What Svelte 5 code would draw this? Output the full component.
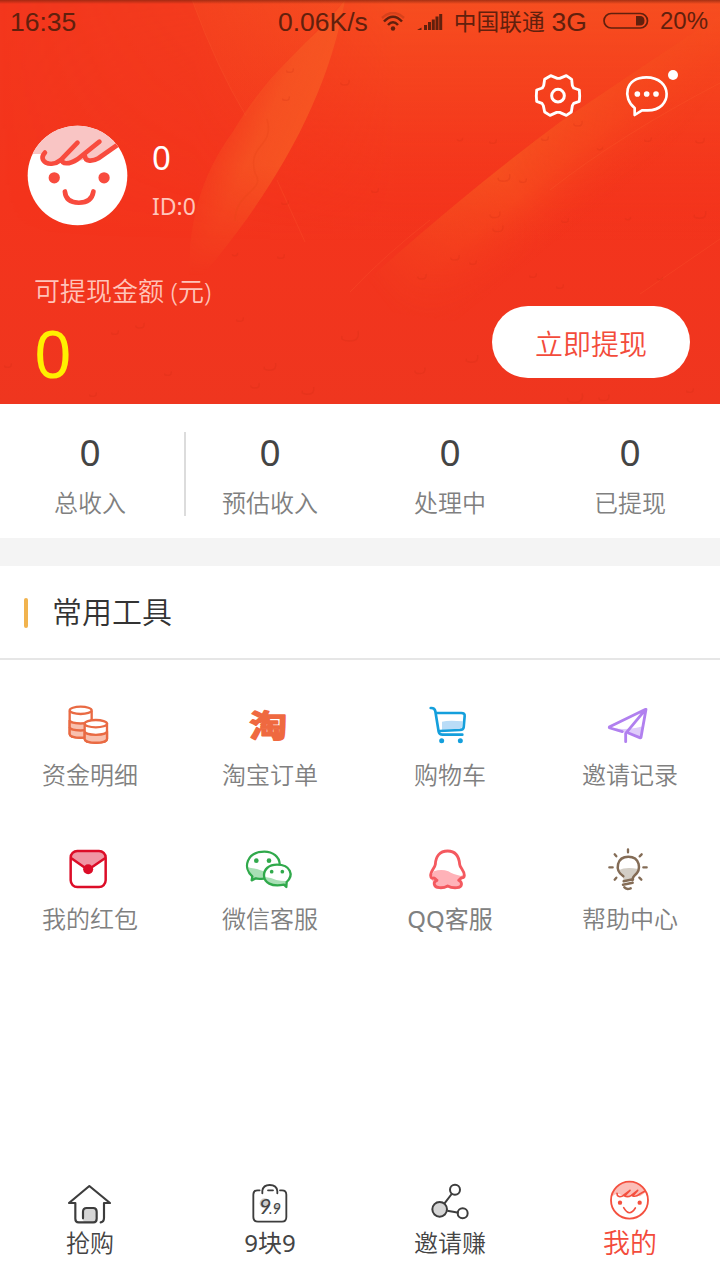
<script>
  const stats = ['总收入', '预估收入', '处理中', '已提现'];
  const tools = [
    { id: 'coins', label: '资金明细', x: 180 },
    { id: 'tao', label: '淘宝订单', x: 720 },
    { id: 'cart', label: '购物车', x: 180 },
    { id: 'plane', label: '邀请记录', x: 720 },
    { id: 'packet', label: '我的红包', x: 180 },
    { id: 'wechat', label: '微信客服', x: 720 },
    { id: 'qq', label: 'QQ客服', x: 180 },
    { id: 'bulb', label: '帮助中心', x: 720 }
  ];
  const tabs = [
    { id: 'home', label: '抢购', x: 180 },
    { id: 'bag', label: '9块9', x: 720 },
    { id: 'share', label: '邀请赚', x: 180 },
    { id: 'me', label: '我的', x: 720 }
  ];
  const drops = [[504,177,7],[523,180,4],[495,214,6],[498,228,6],[455,257,5],[422,276,5],[533,275,4],[473,262,4],[578,123,5],[545,138,4],[600,148,3],[375,190,4],[285,202,4],[420,370,6],[472,358,7],[350,335,10],[270,366,7],[255,385,5],[308,390,7],[140,325,5],[115,332,4],[168,373,4],[93,394,4],[240,319,4],[700,214,7],[565,220,4],[628,218,3],[660,278,3],[700,140,5],[648,139,4],[345,82,5],[286,98,4],[290,70,4],[493,141,4],[560,286,4],[575,397,9],[604,397,6],[690,390,4],[8,365,4],[460,139,3],[235,254,3],[281,256,4]];
</script>

{#snippet icon(id)}
  {#if id === 'coins'}
    <g fill="#fff" stroke="#e96a43" stroke-width="7">
      <path d="M209 62v70c0 15 66 15 66 0V62" />
      <path d="M209 90c0 14 66 14 66 0v42c0 15-66 15-66 0z" fill="#f8c0ae" />
      <path d="M209 111c0 14 66 14 66 0" fill="none" />
      <ellipse cx="242" cy="61" rx="33" ry="11" />
      <path d="M254 99v48c0 15 67 15 67 0V99" />
      <path d="M254 124c0 14 67 14 67 0v23c0 15-67 15-67 0z" fill="#f8c0ae" />
      <ellipse cx="287.500" cy="101" rx="33.500" ry="11" />
    </g>
  {:else if id === 'tao'}
    <text class="tao" transform="translate(748 142) scale(1 .82)">淘</text>
  {:else if id === 'cart'}
    <path d="M246 95q20-5 62-1l-2 16q-1 7-8 8l-52 2z" fill="#b9dcf7" />
    <g fill="none" stroke="#149fdc" stroke-width="8" stroke-linecap="round" stroke-linejoin="round">
      <path d="M212 54q12-1 14 10l10 61q2 9 12 9h59" />
      <path d="M230 69h74q11 0 10 9l-3 34q-1 7-11 8l-61 3" />
    </g>
    <g fill="#149fdc"><circle cx="245" cy="152" r="7.500" /><circle cx="301" cy="152" r="7.500" /></g>
  {:else if id === 'plane'}
    <path d="M764 114q25 6 66-1l19-4-8 33-43-14-20-5z" fill="#dfccfa" />
    <path d="M797 155v-25l60-72-108 52q-3 2 1 4l37 11M858 58l-15 84q-1 2-4 1l-34-14" fill="none" stroke="#b180ef" stroke-width="8.500" stroke-linecap="round" stroke-linejoin="round" />
  {:else if id === 'packet'}
    <rect x="212" y="48" width="105" height="108" rx="20" fill="#fff" />
    <path d="M213 70q2-22 25-22h55q22 0 24 22l-46 31q-7 4-14 0z" fill="#f096a4" />
    <g fill="none" stroke="#dc0d28" stroke-width="7.500">
      <rect x="212" y="48" width="105" height="108" rx="20" />
      <path d="M213 69l44 31q7 5 14 0l45-31" />
    </g>
    <circle cx="264.500" cy="103" r="15" fill="#dc0d28" />
  {:else if id === 'wechat'}
    <path d="M741 96q12 3 30 6 17 6 28 10l-8 18-22-1-13 5 1-10q-14-12-16-28z" fill="#a9dfb5" />
    <path d="M792 131q-20 2-25-1l-12 6 2-12c-30-25-17-74 36-74 26 0 45 16 46 37" fill="none" stroke="#30a94b" stroke-width="7" stroke-linejoin="round" />
    <path d="M852 149l7 7 1-15c22-20 12-52-29-52-25 0-39 14-39 32 0 21 22 36 60 28z" fill="#fff" />
    <path d="M794 126q20 1 35 9 18 4 34 3l-4 17-8-6q-50 9-57-23z" fill="#a9dfb5" />
    <path d="M852 149l7 7 1-15c22-20 12-52-29-52-25 0-39 14-39 32 0 21 22 36 60 28z" fill="none" stroke="#30a94b" stroke-width="7" stroke-linejoin="round" />
    <g fill="#30a94b"><circle cx="769" cy="77" r="7" /><circle cx="807" cy="77" r="7" /><circle cx="815" cy="110" r="5.500" /><circle cx="847" cy="110" r="5.500" /></g>
  {:else if id === 'qq'}
    <path d="M222 109q22-8 43 0 14 9 38 14l8-5-4 17-10 3 7 9-14 9-25-3-20 5-21-5 3-13-10-1-3-17z" fill="#ffb2b8" />
    <path d="M263 48c-25 0-36 18-37 40-1 10-15 20-14 34 1 11 6 7 10 7 3 0 5 5 9 7-13 4-11 21 7 22 11 1 18-1 25-5 9 5 16 6 28 5 17-2 17-16 5-22 5-3 6-8 9-8 4 0 8 1 8-7 0-15-13-22-14-33-2-23-12-40-36-40z" fill="none" stroke="#f4595f" stroke-width="8.500" stroke-linejoin="round" />
  {:else if id === 'bulb'}
    <path d="M776 106q20-11 58-4-1 13-12 23l-5 12-27 2 0-12q-10-6-14-21z" fill="#d3cec6" />
    <g fill="none" stroke="#846c56" stroke-width="7.500" stroke-linecap="round" stroke-linejoin="round">
      <path d="M790 124C762 105 771 65 805 65s42 39 18 57q-5 4-5 13M791 139l28-6M789 149l29-6M793 157q6 8 19 3" />
      <path d="M804 43v9M764 58l5 6M845 58l-6 6M748 97h10M850 97h10M769 128l-5 6M838 128l6 6" stroke-width="7" />
    </g>
  {:else if id === 'home'}
    <rect x="249" y="114" width="40" height="43" rx="9" fill="#d6d6d6" />
    <path d="M249 145v-20q0-11 11-11h20q10 0 10 11v21q0 11-10 11h-44q-10 0-10-11V99h-19l61-51 62 51h-18v44q0 12-10 14" fill="none" stroke="#3d3d3d" stroke-width="6.500" stroke-linecap="round" stroke-linejoin="round" />
  {:else if id === 'bag'}
    <circle cx="794" cy="100" r="15" fill="#ccc" /><circle cx="831" cy="111" r="10" fill="#ccc" />
    <text class="nine" x="777" y="131"><tspan font-size="64">9</tspan><tspan font-size="44" dx="-7">.9</tspan></text>
    <path d="M779 61h-6q-13 0-13 13v67q0 14 14 14h72q13 0 13-14V74q0-13-13-13h-6M787 70V62q3-17 22-17 21 0 23 18v7M804 61h15" fill="none" stroke="#3d3d3d" stroke-width="5.500" stroke-linecap="round" />
  {:else if id === 'share'}
    <g fill="none" stroke="#3d3d3d" stroke-width="6">
      <path d="M275 72l-22 29M262 122l34 6" />
      <circle cx="285" cy="59" r="15" /><circle cx="308" cy="130" r="15" />
      <circle cx="239" cy="118" r="22" fill="#d6d6d6" />
    </g>
  {:else if id === 'me'}
    <path d="M757 79q6-40 51-43 37 2 50 30l-18 13-16-3-17 5-22-5q-15-9-28 3z" fill="#fbbeb8" />
    <g fill="none" stroke="#f4503f" stroke-linecap="round" stroke-linejoin="round">
      <circle cx="808.500" cy="90.500" r="55.500" stroke-width="5.500" />
      <path d="M771 70q0 14 17 8l22-17-16 17q9 5 20-2l19-15-15 17q11 3 20-5l16-9M791 113q17 30 35 1" stroke-width="5" />
    </g>
    <circle cx="780" cy="98" r="6.500" fill="#f4503f" /><circle cx="839" cy="98" r="6.500" fill="#f4503f" />
  {/if}
{/snippet}

<main>
  <header>
    <svg class="art" viewBox="0 0 720 404" aria-hidden="true">
      <defs>
        <linearGradient id="base" x2="0" y2="1"><stop stop-color="#f3371d" /><stop offset=".5" stop-color="#f4341c" /><stop offset="1" stop-color="#ef361f" /></linearGradient>
        <linearGradient id="top" x2="0" y2="1"><stop stop-color="#f64e20" /><stop offset=".35" stop-color="#f6471e" stop-opacity=".7" /><stop offset="1" stop-color="#f5351c" stop-opacity="0" /></linearGradient>
        <linearGradient id="side"><stop stop-color="#000" /><stop offset=".27" stop-color="#333" /><stop offset=".55" stop-color="#fff" /><stop offset="1" stop-color="#fff" /></linearGradient>
        <mask id="fade"><rect width="720" height="240" fill="url(#side)" /></mask>
        <linearGradient id="leaf" gradientUnits="userSpaceOnUse" x1="205" y1="140" x2="300" y2="185"><stop stop-color="#f65a24" stop-opacity="0" /><stop offset=".45" stop-color="#f65a24" stop-opacity=".7" /><stop offset="1" stop-color="#f75522" /></linearGradient>
        <linearGradient id="down" x2="0" y2="1"><stop stop-color="#fff" /><stop offset=".6" stop-color="#fff" /><stop offset="1" stop-color="#000" /></linearGradient>
        <mask id="leafFade"><rect x="180" width="180" height="275" fill="url(#down)" /></mask>
        <linearGradient id="veil" x2="0" y2="1"><stop stop-color="#f75321" stop-opacity=".3" /><stop offset="1" stop-color="#f75321" stop-opacity=".12" /></linearGradient>
        <linearGradient id="petal" gradientUnits="userSpaceOnUse" x1="485" y1="165" x2="550" y2="246"><stop stop-color="#f65720" stop-opacity=".85" /><stop offset=".45" stop-color="#f74d1e" stop-opacity=".7" /><stop offset="1" stop-color="#f53b1c" stop-opacity="0" /></linearGradient>
        <linearGradient id="tail" gradientUnits="userSpaceOnUse" x1="710" y1="30" x2="375" y2="290"><stop stop-color="#555" /><stop offset=".4" stop-color="#ccc" /><stop offset=".6" stop-color="#fff" /><stop offset=".8" stop-color="#888" /><stop offset="1" stop-color="#000" /></linearGradient>
        <mask id="petalFade"><rect x="340" y="0" width="380" height="340" fill="url(#tail)" /></mask>
        <linearGradient id="shade" x2="0" y2="1"><stop stop-color="#7b210d" stop-opacity=".65" /><stop offset="1" stop-color="#7b210d" stop-opacity="0" /></linearGradient>
      </defs>
      <rect width="720" height="404" fill="url(#base)" />
      <rect width="720" height="240" fill="url(#top)" mask="url(#fade)" />
      <path d="M192 0Q217 68 246 116 270 75 305 43 325 20 345 0z" fill="url(#veil)" />
      <path d="M345 0Q330 20 305 43C270 78 253 98 232 133 205 170 185 220 190 290L214 262C280 180 328 95 345 0z" fill="url(#leaf)" mask="url(#leafFade)" />
      <path d="M720 15Q640 68 560 122 455 200 340 305L520 330Q620 220 720 83z" fill="url(#petal)" mask="url(#petalFade)" />
      <path d="M720 83Q620 135 550 190M277 180l28 62M720 239l-80 55M192 0q25 68 54 116M430 220Q385 255 350 292" fill="none" stroke="#ff6a39" stroke-width="1" opacity=".2" />
      <path d="M267 119c8 29-20 24-12 54 12 18-20 18-20 48" fill="none" stroke="#e9461a" stroke-width="1.500" opacity=".35" />
      {#each drops as [x, y, r]}
        <path d={`M${x + r * .8} ${y - r * .4}q${r * .2} ${r}-${r * .8} ${r}t-${r * .8}-${r / 2}`} fill="none" stroke="#c92c12" stroke-width="1.400" opacity=".2" />
      {/each}
      <rect width="720" height="4" fill="url(#shade)" />
    </svg>

    <div class="status">
      <span class="clock">16:35</span>
      <span class="speed">0.06K/s</span>
      <svg class="wifi" viewBox="0 0 24 20" width="24" height="20">
        <g fill="none" stroke="#61200d" stroke-width="2.500"><path d="M1 6Q12-4 23 6" opacity=".2" /><path d="M3 9.500Q12 0 21 9.500M7 13q5-5.500 10 0" /></g><circle cx="12" cy="16.500" r="2.200" fill="#61200d" />
      </svg>
      <svg class="signal" viewBox="0 0 26 18" width="26" height="18"><path d="M0 17l4.500-2.500V17zM7 12h3v5H7zM11 9h3v8h-3zM14.800 6.500h3V17h-3zM18.500 3.500h3V17h-3zM22.200 1h3v16h-3z" fill="#61200d" /></svg>
      <span class="carrier">中国联通</span><span class="net">3G</span>
      <svg class="battery" viewBox="0 0 46 18" width="46" height="18"><rect x="1" y="1.500" width="43.500" height="14.500" rx="7.250" fill="none" stroke="#61200d" stroke-width="1.700" /><path d="M33 4h4q4.500 0 4.500 4.750T37 13.500h-4z" fill="#61200d" /></svg>
      <span class="percent">20%</span>
    </div>

    <div class="actions">
      <svg viewBox="522 216 144 144" width="48" height="48" aria-label="设置">
        <path d="M572 227l20 8h7l20-8 16 11 2 19 4 7 17 6q2 17 0 34l-17 6-4 7-3 19-15 10-20-9h-9l-20 9-16-10-4-19-4-7-16-6q-2-17 0-34l17-6 4-7 3-19z" fill="none" stroke="#fff" stroke-width="8.500" stroke-linejoin="round" />
        <circle cx="594" cy="287" r="19" fill="none" stroke="#fff" stroke-width="9" />
      </svg>
      <svg viewBox="786 204 174 156" width="58" height="52" aria-label="消息">
        <path d="M824 345v-21c-37-29-30-92 35-92 80 0 81 99 4 99h-17z" fill="none" stroke="#fff" stroke-width="8" stroke-linejoin="round" />
        <g fill="#fff"><circle cx="832" cy="282" r="8.500" /><circle cx="860" cy="282" r="8.500" /><circle cx="888" cy="282" r="8.500" /><circle cx="939" cy="225" r="15" /></g>
      </svg>
    </div>

    <div class="profile">
      <svg viewBox="82 376 304 304" width="101" height="101">
        <defs><clipPath id="face"><circle cx="234" cy="528" r="150" /></clipPath></defs>
        <circle cx="234" cy="528" r="150" fill="#fff" />
        <g clip-path="url(#face)"><path d="M80 463h46q13 32 52 20l35 7 55-13 28 6 66-47-50-70H100z" fill="#f9c5c4" />
          <path d="M136 459c-24 25 16 48 48 22l50-52M188 478c-4 18 22 17 46 1l66-53M256 468c0 20 24 18 41 8l60-42" fill="none" stroke="#f84b3e" stroke-width="14" stroke-linecap="round" stroke-linejoin="round" />
        </g>
        <path d="M196 576q2 33 42 34 39 0 44-34" fill="none" stroke="#f84b3e" stroke-width="14" stroke-linecap="round" />
        <circle cx="164" cy="535" r="17" fill="#f84b3e" /><circle cx="314" cy="535" r="17" fill="#f84b3e" />
      </svg>
      <div class="who"><strong>0</strong><span>ID:0</span></div>
    </div>

    <div class="balance">
      <div class="money"><span>可提现金额 (元)</span><strong>0</strong></div>
      <button>立即提现</button>
    </div>
  </header>

  <section class="stats">
    {#each stats as label}
      <div class="stat"><strong>0</strong><span>{label}</span></div>
    {/each}
  </section>

  <section class="tools">
    <h2>常用工具</h2>
    <div class="grid">
      {#each tools as t}
        <div class="tool" class:mixed={t.id === 'qq'}>
          <svg viewBox={`${t.x} 30 180 150`} width="60" height="50">{@render icon(t.id)}</svg>
          <span>{t.label}</span>
        </div>
      {/each}
    </div>
  </section>

  <nav>
    {#each tabs as t}
      <div class="tab" class:active={t.id === 'me'} class:mixed={t.id === 'bag'}>
        <svg viewBox={`${t.x} 24 180 144`} width="60" height="48">{@render icon(t.id)}</svg>
        <span>{t.label}</span>
      </div>
    {/each}
  </nav>
</main>

<style>
  :global(body) { background: #fff; }
  main { width: 720px; height: 1280px; display: flex; flex-direction: column; overflow: hidden; background: #fff; font-family: "Noto Sans", "Noto Sans CJK SC", sans-serif; font-weight: 350; }
  svg { display: block; flex: none; }
  strong { font-weight: 400; }
  header { position: relative; height: 404px; flex: none; display: flex; flex-direction: column; isolation: isolate; }
  .art { position: absolute; inset: 0; z-index: -1; width: 720px; height: 404px; }
  .status { display: flex; align-items: center; height: 42px; padding: 1px 12px 0 10px; box-sizing: border-box; color: #61200d; font: 26.5px/40px "Liberation Sans", sans-serif; white-space: nowrap; }
  .clock { margin-right: auto; }
  .wifi { margin-left: 13px; }
  .signal { margin-left: 12px; }
  .carrier { margin-left: 11px; font: 22.700px/40px "Noto Sans CJK SC", sans-serif; margin-top: -2px; }
  .net { margin-left: 7px; }
  .battery { margin-left: 16px; margin-top: -2px; }
  .percent { margin-left: 11px; font-size: 24px; margin-top: -2px; }
  .actions { display: flex; justify-content: flex-end; align-items: flex-start; gap: 40px; height: 83px; padding: 26px 40px 0 0; box-sizing: border-box; }
  .actions svg:first-child { margin-top: 4px; }
  .profile { display: flex; height: 101px; padding-left: 27px; gap: 24px; }
  .who { display: flex; flex-direction: column; color: #fff; }
  .who strong { font-size: 33px; line-height: 40px; margin-top: 13px; }
  .who span { font-size: 23px; font-weight: 400; line-height: 30px; margin-top: 13px; color: #ffc5ba; }
  .balance { display: flex; justify-content: space-between; height: 130px; margin-top: 48px; padding: 0 30px 0 34px; }
  .money { display: flex; flex-direction: column; color: #ffc3b9; }
  .money span { font-size: 26px; line-height: 34px; }
  .money strong { color: #fff000; font-size: 66px; line-height: 80px; margin-top: 4px; }
  button { width: 198px; height: 72px; margin: 32px 0 0; padding: 4px 0 0; border: 0; border-radius: 36px; background: #fff; color: #f34b3b; font: 350 28px/40px "Noto Sans", "Noto Sans CJK SC", sans-serif; }
  .stats { display: grid; grid-template-columns: repeat(4, 1fr); height: 134px; flex: none; padding-top: 28px; box-sizing: border-box; }
  .stat { position: relative; display: flex; flex-direction: column; align-items: center; }
  .stat:first-child::after { content: ""; position: absolute; left: 184px; top: 0; width: 2px; height: 84px; background: #dcdcdc; }
  .stat strong { color: #444; font-size: 37px; line-height: 40px; }
  .stat span { color: #808080; font-size: 24px; line-height: 32px; margin-top: 15px; }
  .tools { border-top: 28px solid #f4f4f4; }
  h2 { display: flex; align-items: center; height: 92px; margin: 0; padding-left: 24px; border-bottom: 2px solid #e6e6e6; color: #333; font-size: 30px; font-weight: 350; line-height: 90px; }
  h2::before { content: ""; width: 4px; height: 30px; border-radius: 2px; margin: 2px 24px 0 0; background: #f1b34e; }
  .grid { display: grid; grid-template-columns: repeat(4, 1fr); grid-auto-rows: 144px; padding-top: 40px; }
  .tool { display: flex; flex-direction: column; align-items: center; color: #808080; font-size: 24px; line-height: 32px; }
  .tool span { margin-top: 9px; }
  .tool:nth-child(n + 5) svg { margin-top: 1px; }
  .tool:nth-child(n + 5) span { margin-top: 8px; }
  .tao { font: 700 114px "Noto Sans CJK SC", sans-serif; fill: #ef6940; stroke: #ef6940; stroke-width: 5px; stroke-linejoin: round; }
  .nine { font-family: Lato, sans-serif; font-style: italic; font-weight: 400; fill: #444; }
  nav { display: grid; grid-template-columns: repeat(4, 1fr); height: 102px; margin-top: auto; }
  .tab { display: flex; flex-direction: column; align-items: center; color: #444; font-size: 24px; line-height: 34px; }
  .active { color: #f34b3b; font-size: 27px; }
  .mixed { font-weight: 400; }
</style>
